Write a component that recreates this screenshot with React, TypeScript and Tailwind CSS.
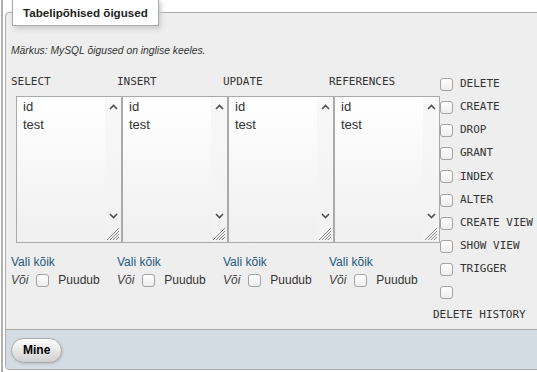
import React from 'react'

const mono = { fontFamily: '"DejaVu Sans Mono", monospace' }

const Chevron = ({ up }: { up?: boolean }) => (
  <svg width="9" height="6" viewBox="0 0 9 6" className="block">
    <path d={up ? 'M1 5 L4.5 1.5 L8 5' : 'M1 1 L4.5 4.5 L8 1'} fill="none" stroke="#505050" strokeWidth="1.6" />
  </svg>
)

const Grip = () => (
  <svg width="13" height="13" viewBox="0 0 13 13" className="block">
    <path d="M12 3 L3 12 M12 6 L6 12 M12 9 L9 12 M12 0 L0 12" stroke="#8a8a8a" strokeWidth="1" />
  </svg>
)

const Check = ({ className = '' }: { className?: string }) => (
  <input
    type="checkbox"
    className={`appearance-none w-[13px] h-[13px] border border-[#a3a3a3] rounded-[3px] bg-gradient-to-b from-white to-[#ededed] shrink-0 ${className}`}
  />
)

const ListBox = () => (
  <div className="ml-[5px] w-[106px] h-[147px] border border-[#aaa] bg-gradient-to-b from-white to-[#efefef] flex">
    <div className="flex-1 pl-[6px] pt-[1px] text-[13px] leading-[18px] text-[#333]">
      <div>id</div>
      <div>test</div>
    </div>
    <div className="w-[16px] flex flex-col items-center bg-[#f3f3f3]/60">
      <div className="pt-[7px]"><Chevron up /></div>
      <div className="flex-1" />
      <div className="pb-[9px]"><Chevron /></div>
      <div className="self-end pb-[1px] pr-[1px]"><Grip /></div>
    </div>
  </div>
)

const cols = ['SELECT', 'INSERT', 'UPDATE', 'REFERENCES']
const privs = ['DELETE', 'CREATE', 'DROP', 'GRANT', 'INDEX', 'ALTER', 'CREATE VIEW', 'SHOW VIEW', 'TRIGGER']

export default function App() {
  return (
    <div className="w-[537px] h-[372px] overflow-hidden bg-white" style={{ fontFamily: '"Liberation Sans", Arial, sans-serif' }}>
      <div className="ml-px border-l-[2px] border-[#b0b0b0] h-[372px] pl-[2px] flex flex-col">
        {/* legend */}
        <div className="relative z-10 self-start -mt-[2px] ml-[7px] h-[28px] px-[10px] bg-white border border-[#aaa] shadow-[2px_3px_5px_#ccc] text-[11.6px] font-bold text-[#222] leading-[28px]">
          Tabelipõhised õigused
        </div>
        <div className="-mt-[14px] w-[600px] border border-[#aaa] rounded-[4px] bg-[#eee]">
          <div className="pl-[5px] pt-[31px] pb-[6px]">
            <p className="text-[10.3px] italic text-[#333] leading-[14px]">Märkus: MySQL õigused on inglise keeles.</p>
            <div className="flex mt-[16px]">
              {cols.map(c => (
                <div key={c} className="w-[106px]">
                  <div className="text-[11px] leading-[16px] text-[#333] h-[16px]" style={mono}>{c}</div>
                  <div className="mt-[6px]">
                    <ListBox />
                  </div>
                  <div className="mt-[12px] text-[12px] leading-[14px] text-[#235a81]">Vali kõik</div>
                  <div className="mt-[4px] flex items-center text-[12px] leading-[14px] text-[#333]">
                    <span className="italic text-[#444]">Või</span>
                    <Check className="ml-[8px] mr-[9px]" />
                    <span>Puudub</span>
                  </div>
                </div>
              ))}
              <div className="-mt-[1.5px] text-[11px] text-[#333]" style={mono}>
                {privs.map(p => (
                  <div key={p} className="h-[23.2px] flex items-center">
                    <Check className="ml-[5px] mr-[7px]" />
                    <span className="whitespace-nowrap">{p}</span>
                  </div>
                ))}
                <div className="h-[23.2px] flex items-center">
                  <Check className="ml-[5px]" />
                </div>
                <div className="-ml-[2px] mt-[3px] leading-[16px] whitespace-nowrap">DELETE HISTORY</div>
              </div>
            </div>
          </div>
          <div className="border-t border-[#aaa] bg-[#d3dce3] rounded-b-[4px] pl-[5px] pt-[7px] pb-[6px]">
            <button className="h-[25px] px-[11px] rounded-full border border-[#aaa] bg-gradient-to-b from-white to-[#cfcfcf] text-[12px] font-bold text-black shadow-[1px_1px_2px_#bbb]">
              Mine
            </button>
          </div>
        </div>
      </div>
    </div>
  )
}
